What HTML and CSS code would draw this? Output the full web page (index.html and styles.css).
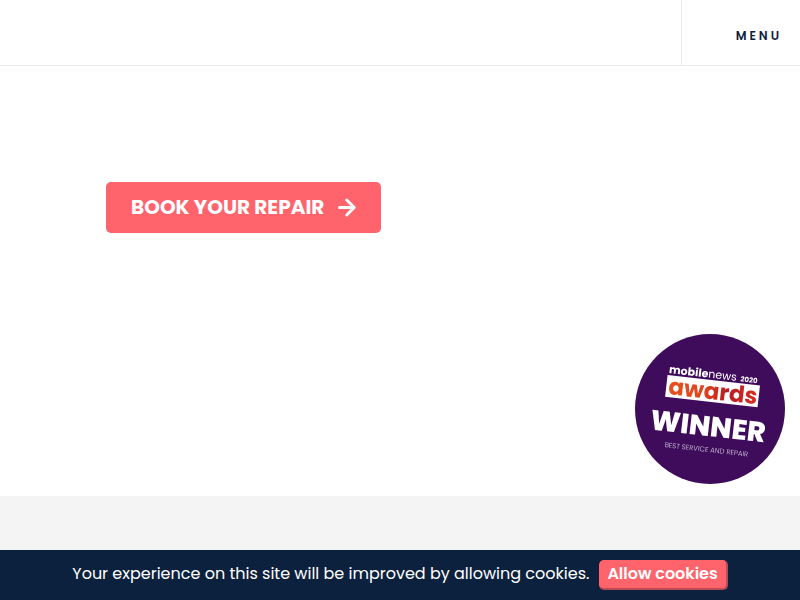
FILE: index.html
```html
<!DOCTYPE html>
<html lang="en">
<head>
    <meta charset="UTF-8">
    <meta name="viewport" content="width=device-width, initial-scale=1.0">
    <title>Book Your Repair</title>
    <link rel="stylesheet" href="styles.css">
</head>
<body>

<!-- Header -->
<header class="header">
    <button type="button" class="menu-btn">MENU</button>
</header>

<!-- Hero -->
<main class="hero">
    <a href="#book" class="book-btn">
        <span>BOOK YOUR REPAIR</span>
        <svg class="arrow" viewBox="0 0 18 20" aria-hidden="true">
            <path d="M1.5 9.5H15.5M8.8 2L16.2 9.5L8.8 17"/>
        </svg>
    </a>
</main>

<section class="next-section" id="book"></section>

<!-- Award badge -->
<svg class="award-badge" viewBox="0 0 150 150" role="img" aria-label="Mobile News Awards 2020 winner">
    <defs>
        <linearGradient id="awards-fill" x1="0" y1="0" x2="1" y2="0">
            <stop offset="0" stop-color="#e8501e"/>
            <stop offset="0.4" stop-color="#e2431d"/>
            <stop offset="0.65" stop-color="#b81c22"/>
            <stop offset="1" stop-color="#d92c20"/>
        </linearGradient>
    </defs>
    <circle cx="75" cy="75" r="75" fill="#3f0c5c"/>
    <g transform="rotate(6.5 75 75)">
        <text x="30" y="44" class="badge-brand">mobile<tspan class="badge-light">news</tspan></text>
        <text x="102" y="44" class="badge-year">2020</text>
        <rect x="29" y="46" width="93" height="22" fill="#fff"/>
        <text x="76" y="65" class="badge-awards">awards</text>
        <text x="75" y="102" class="badge-winner">WINNER</text>
        <text x="76" y="118" class="badge-category">BEST SERVICE AND REPAIR</text>
    </g>
</svg>

<!-- Cookie bar -->
<div class="cookie-bar">
    <span class="cookie-text">Your experience on this site will be improved by allowing cookies.</span>
    <button type="button" class="cookie-btn">Allow cookies</button>
</div>

</body>
</html>
```
FILE: styles.css
```css
* {
    margin: 0;
    padding: 0;
    box-sizing: border-box;
    font-family: Poppins, Inter, "Open Sans", sans-serif;
}

body {
    min-height: 100vh;
    display: flex;
    flex-direction: column;
    background-color: #fff;
    color: #0c213d;
}

.header {
    display: flex;
    justify-content: flex-end;
    border-bottom: 1px solid #ebebeb;
}

.menu-btn {
    padding: 26px 18px 19px 54px;
    border: none;
    border-left: 1px solid #ebebeb;
    background: none;
    color: #0c213d;
    font-size: 12px;
    font-weight: 600;
    line-height: 20px;
    letter-spacing: 3px;
    cursor: pointer;
}

.hero {
    height: 430px;
    padding: 116px 106px;
}

.book-btn {
    display: inline-flex;
    align-items: center;
    gap: 14px;
    padding: 10px 25px;
    border-radius: 5px;
    background-color: #ff636c;
    color: #fff;
    font-size: 20px;
    font-weight: 700;
    line-height: 31px;
    text-decoration: none;
}

.arrow {
    width: 18px;
    height: 20px;
    fill: none;
    stroke: #fff;
    stroke-width: 3;
    stroke-linecap: round;
    stroke-linejoin: round;
}

.next-section {
    flex-grow: 1;
    background-color: #f4f4f4;
}

.award-badge {
    position: fixed;
    right: 15px;
    bottom: 116px;
    width: 150px;
    height: 150px;
    fill: #fff;
}

.badge-brand {
    font-size: 11px;
    font-weight: 700;
}

.badge-light {
    font-weight: 400;
}

.badge-year {
    font-size: 7px;
    font-weight: 700;
}

.badge-awards {
    font-size: 23px;
    font-weight: 700;
    text-anchor: middle;
    fill: url(#awards-fill);
}

.badge-winner {
    font-size: 28px;
    font-weight: 800;
    text-anchor: middle;
}

.badge-category {
    font-size: 7px;
    font-weight: 300;
    text-anchor: middle;
    fill: #d9cfe0;
}

.cookie-bar {
    position: fixed;
    right: 0;
    bottom: 0;
    left: 0;
    display: flex;
    justify-content: center;
    align-items: flex-start;
    gap: 10px;
    padding: 10px;
    background-color: #0c213d;
    color: #fff;
    font-size: 16px;
    line-height: 28px;
}

.cookie-btn {
    padding: 0 8px;
    border: none;
    border-right: 2px solid #b94a56;
    border-bottom: 2px solid #b94a56;
    border-radius: 5px;
    background-color: #ff636c;
    color: #fff;
    font-size: 16px;
    font-weight: 600;
    line-height: 28px;
    cursor: pointer;
}
```
